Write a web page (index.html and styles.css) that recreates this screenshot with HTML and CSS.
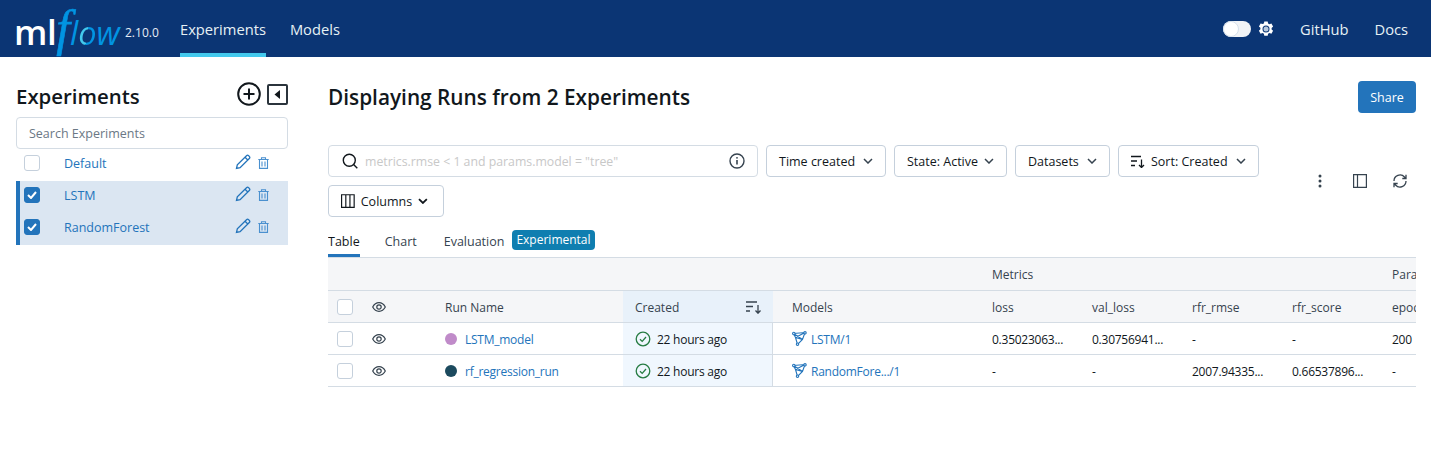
FILE: index.html
```html
<!DOCTYPE html>
<html lang="en">
<head>
    <meta charset="UTF-8">
    <title>MLflow Experiments</title>
    <link rel="stylesheet" href="styles.css">
</head>
<body>

    <!-- Top bar -->
    <header class="topbar">
        <div class="logo"><span class="logo-ml">ml</span><span class="logo-f">f</span><span class="logo-flow">l<span class="logo-o">o</span>w</span></div>
        <span class="version">2.10.0</span>
        <nav class="nav">
            <a class="nav-link active">Experiments</a>
            <a class="nav-link">Models</a>
        </nav>
        <div class="nav-right">
            <span class="toggle"><span class="toggle-knob"></span></span>
            <svg class="gear" width="16" height="16" viewBox="0 0 16 16"><path fill="#fff" fill-rule="evenodd" d="M6.300.5h3.400l.4 2 1.300.7 2-.6 1.700 2.900-1.500 1.400v1.500l1.500 1.400-1.700 2.900-2-.6-1.300.7-.4 2H6.300l-.4-2-1.300-.7-2 .6L.9 9.700l1.500-1.400V6.800L.9 5.400l1.700-2.900 2 .6 1.300-.7zM8 4.500a3.500 3.500 0 1 0 0 7 3.500 3.500 0 0 0 0-7z"/><circle cx="8" cy="8" r="2.500" fill="#b9c9dc"/></svg>
            <a class="nav-link">GitHub</a>
            <a class="nav-link">Docs</a>
        </div>
    </header>

    <div class="page">

        <!-- Experiment list -->
        <aside class="sidebar">
            <div class="side-head">
                <h2>Experiments</h2>
                <div class="side-head-icons">
                    <svg width="24" height="24" viewBox="0 0 24 24" fill="none" stroke="#11171c" stroke-width="2"><circle cx="12" cy="12" r="10.800"/><path d="M12 6.500v11M6.500 12h11"/></svg>
                    <svg width="21" height="21" viewBox="0 0 21 21"><rect x="1" y="1" width="19" height="19" rx="1" fill="none" stroke="#2b343c" stroke-width="2"/><path d="M13 6v9L7.500 10.500z" fill="#11171c"/></svg>
                </div>
            </div>
            <div class="side-search">Search Experiments</div>
            <ul class="exp-list">
                <li class="exp-item">
                    <span class="check"></span>
                    <span class="exp-name">Default</span>
                    <svg class="pencil" width="16" height="16" viewBox="0 0 16 16" fill="none" stroke="#2374bb" stroke-width="1.300"><path d="M1.500 14.500l.8-3.600L11.500 1.700a1.500 1.500 0 0 1 2.100 0l.7.7a1.500 1.500 0 0 1 0 2.100L5.100 13.700zM10 3.200l2.800 2.800"/></svg>
                    <svg class="trash" width="11" height="12" viewBox="0 0 11 12" fill="none" stroke="#4a90cf" stroke-width="1.100"><path d="M.3 2.500h10.400M3.500 2.500V.8h4v1.700M1.500 2.500v8.900h8V2.500M4 4.500v5M7 4.500v5"/></svg>
                </li>
                <li class="exp-item selected">
                    <span class="check checked"><svg width="10" height="8" viewBox="0 0 10 8" fill="none" stroke="#fff" stroke-width="2"><path d="M1 4l3 3 5-6"/></svg></span>
                    <span class="exp-name">LSTM</span>
                    <svg class="pencil" width="16" height="16" viewBox="0 0 16 16" fill="none" stroke="#2374bb" stroke-width="1.300"><path d="M1.500 14.500l.8-3.600L11.500 1.700a1.500 1.500 0 0 1 2.100 0l.7.7a1.500 1.500 0 0 1 0 2.100L5.100 13.700zM10 3.200l2.800 2.800"/></svg>
                    <svg class="trash" width="11" height="12" viewBox="0 0 11 12" fill="none" stroke="#4a90cf" stroke-width="1.100"><path d="M.3 2.500h10.400M3.500 2.500V.8h4v1.700M1.500 2.500v8.900h8V2.500M4 4.500v5M7 4.500v5"/></svg>
                </li>
                <li class="exp-item selected">
                    <span class="check checked"><svg width="10" height="8" viewBox="0 0 10 8" fill="none" stroke="#fff" stroke-width="2"><path d="M1 4l3 3 5-6"/></svg></span>
                    <span class="exp-name">RandomForest</span>
                    <svg class="pencil" width="16" height="16" viewBox="0 0 16 16" fill="none" stroke="#2374bb" stroke-width="1.300"><path d="M1.500 14.500l.8-3.600L11.500 1.700a1.500 1.500 0 0 1 2.100 0l.7.7a1.500 1.500 0 0 1 0 2.100L5.100 13.700zM10 3.200l2.800 2.800"/></svg>
                    <svg class="trash" width="11" height="12" viewBox="0 0 11 12" fill="none" stroke="#4a90cf" stroke-width="1.100"><path d="M.3 2.500h10.400M3.500 2.500V.8h4v1.700M1.500 2.500v8.900h8V2.500M4 4.500v5M7 4.500v5"/></svg>
                </li>
            </ul>
        </aside>

        <!-- Runs -->
        <main class="main">
            <div class="title-row">
                <h1>Displaying Runs from 2 Experiments</h1>
                <button class="share">Share</button>
            </div>

            <div class="controls">
                <div class="filters">
                    <div class="run-search">
                        <svg width="16" height="16" viewBox="0 0 16 16" fill="none" stroke="#11171c" stroke-width="1.400"><circle cx="7.300" cy="7.300" r="6"/><path d="M11.600 11.600l3.700 3.700"/></svg>
                        <span class="placeholder">metrics.rmse &lt; 1 and params.model = "tree"</span>
                        <svg class="info" width="16" height="16" viewBox="0 0 16 16" fill="none" stroke="#36434f" stroke-width="1.400"><circle cx="8" cy="8" r="7"/><path d="M8 7v4.500" stroke-width="1.600"/><circle cx="8" cy="4.800" r=".9" fill="#36434f" stroke="none"/></svg>
                    </div>
                    <button class="btn w-time">Time created <svg class="chev" width="10" height="6" viewBox="0 0 10 6"><path d="M1 1l4 4 4-4" fill="none" stroke="#36434f" stroke-width="1.500"/></svg></button>
                    <button class="btn w-state">State: Active <svg class="chev" width="10" height="6" viewBox="0 0 10 6"><path d="M1 1l4 4 4-4" fill="none" stroke="#36434f" stroke-width="1.500"/></svg></button>
                    <button class="btn w-data">Datasets <svg class="chev" width="10" height="6" viewBox="0 0 10 6"><path d="M1 1l4 4 4-4" fill="none" stroke="#36434f" stroke-width="1.500"/></svg></button>
                    <button class="btn w-sort">
                        <svg width="14" height="13" viewBox="0 0 14 13" fill="none" stroke="#11171c" stroke-width="1.300"><path d="M0 1.500h10M0 6h6M0 10.500h4M10.500 4.500v8M8 10l2.500 2.500L13 10"/></svg>
                        Sort: Created <svg class="chev" width="10" height="6" viewBox="0 0 10 6"><path d="M1 1l4 4 4-4" fill="none" stroke="#36434f" stroke-width="1.500"/></svg></button>
                    <button class="btn w-cols">
                        <svg width="14" height="14" viewBox="0 0 14 14" fill="none" stroke="#11171c" stroke-width="1.200"><path d="M.6.600h12.800v12.800H.6zM4.900.600v12.800M9.100.600v12.800"/></svg>
                        Columns <svg class="chev" width="10" height="6" viewBox="0 0 10 6"><path d="M1 1l4 4 4-4" fill="none" stroke="#11171c" stroke-width="1.800"/></svg></button>
                </div>
                <div class="tools">
                    <svg width="4" height="14" viewBox="0 0 4 14" fill="#36434f"><circle cx="2" cy="2" r="1.500"/><circle cx="2" cy="7" r="1.500"/><circle cx="2" cy="12" r="1.500"/></svg>
                    <svg width="14" height="14" viewBox="0 0 14 14" fill="none" stroke="#36434f" stroke-width="1.200"><path d="M.6.600h12.800v12.800H.6zM4.500.600v12.800"/></svg>
                    <svg width="14" height="14" viewBox="0 0 14 14" fill="none" stroke="#36434f" stroke-width="1.300"><path d="M1 7a6 6 0 0 1 10.500-4L13 4.500M13 .8v3.700H9.300M13 7a6 6 0 0 1-10.500 4L1 9.500M1 13.200V9.500h3.700"/></svg>
                </div>
            </div>

            <div class="tabs">
                <span class="tab active">Table</span>
                <span class="tab">Chart</span>
                <span class="tab tab-eval">Evaluation</span>
                <span class="badge">Experimental</span>
            </div>

            <div class="table">
                <div class="row group-row">
                    <span class="cell c-metrics">Metrics</span>
                    <span class="cell c-params">Parameters</span>
                </div>
                <div class="row head-row">
                    <span class="cell c-check"><span class="check"></span></span>
                    <span class="cell"><svg width="14" height="10" viewBox="0 0 14 10" fill="none" stroke="#36434f" stroke-width="1.200"><path d="M.7 5C2.300 2 4.500.7 7 .7S11.700 2 13.300 5C11.700 8 9.500 9.300 7 9.300S2.300 8 .7 5z"/><circle cx="7" cy="5" r="2.200"/></svg></span>
                    <span class="cell">Run Name</span>
                    <span class="cell c-created head-created">Created
                        <svg width="16" height="14" viewBox="0 0 16 14" fill="none" stroke="#36434f" stroke-width="1.300"><path d="M0 2h11M0 6.500h7M0 11h4M12 5v8M9.500 10.500l2.500 2.700 2.500-2.700"/></svg></span>
                    <span class="cell c-spacer"></span>
                    <span class="cell">Models</span>
                    <span class="cell">loss</span>
                    <span class="cell">val_loss</span>
                    <span class="cell">rfr_rmse</span>
                    <span class="cell">rfr_score</span>
                    <span class="cell">epochs</span>
                </div>
                <div class="row run-row">
                    <span class="cell c-check"><span class="check"></span></span>
                    <span class="cell"><svg width="14" height="10" viewBox="0 0 14 10" fill="none" stroke="#36434f" stroke-width="1.200"><path d="M.7 5C2.300 2 4.500.7 7 .7S11.700 2 13.300 5C11.700 8 9.500 9.300 7 9.300S2.300 8 .7 5z"/><circle cx="7" cy="5" r="2.200"/></svg></span>
                    <span class="cell"><i class="dot dot-lstm"></i><a class="link">LSTM_model</a></span>
                    <span class="cell c-created"><svg width="16" height="16" viewBox="0 0 16 16" fill="none" stroke="#277c43" stroke-width="1.300"><circle cx="8" cy="8" r="6.800"/><path d="M5 8.200l2.200 2.200L11 6"/></svg>22 hours ago</span>
                    <span class="cell c-spacer"></span>
                    <span class="cell"><svg class="model" width="15" height="15" viewBox="0 0 15 15" fill="none" stroke="#2374bb" stroke-width="1.100"><path d="M1.500 2.500L13 1.500 10.500 8.500 5.500 13.500 3.500 6.500zM3.500 6.500l7 2M1.500 2.500l9 6M13 1.500L3.500 6.500"/><circle cx="1.800" cy="2.500" r="1.200" fill="#fff"/><circle cx="13" cy="1.800" r="1.200" fill="#fff"/><circle cx="5.500" cy="13.200" r="1.200" fill="#fff"/></svg><a class="link">LSTM/1</a></span>
                    <span class="cell">0.35023063...</span>
                    <span class="cell">0.30756941...</span>
                    <span class="cell">-</span>
                    <span class="cell">-</span>
                    <span class="cell">200</span>
                </div>
                <div class="row run-row">
                    <span class="cell c-check"><span class="check"></span></span>
                    <span class="cell"><svg width="14" height="10" viewBox="0 0 14 10" fill="none" stroke="#36434f" stroke-width="1.200"><path d="M.7 5C2.300 2 4.500.7 7 .7S11.700 2 13.300 5C11.700 8 9.500 9.300 7 9.300S2.300 8 .7 5z"/><circle cx="7" cy="5" r="2.200"/></svg></span>
                    <span class="cell"><i class="dot dot-rf"></i><a class="link">rf_regression_run</a></span>
                    <span class="cell c-created"><svg width="16" height="16" viewBox="0 0 16 16" fill="none" stroke="#277c43" stroke-width="1.300"><circle cx="8" cy="8" r="6.800"/><path d="M5 8.200l2.200 2.200L11 6"/></svg>22 hours ago</span>
                    <span class="cell c-spacer"></span>
                    <span class="cell"><svg class="model" width="15" height="15" viewBox="0 0 15 15" fill="none" stroke="#2374bb" stroke-width="1.100"><path d="M1.500 2.500L13 1.500 10.500 8.500 5.500 13.500 3.500 6.500zM3.500 6.500l7 2M1.500 2.500l9 6M13 1.500L3.500 6.500"/><circle cx="1.800" cy="2.500" r="1.200" fill="#fff"/><circle cx="13" cy="1.800" r="1.200" fill="#fff"/><circle cx="5.500" cy="13.200" r="1.200" fill="#fff"/></svg><a class="link">RandomFore.../1</a></span>
                    <span class="cell">-</span>
                    <span class="cell">-</span>
                    <span class="cell">2007.94335...</span>
                    <span class="cell">0.66537896...</span>
                    <span class="cell">-</span>
                </div>
            </div>
        </main>
    </div>

</body>
</html>
```

FILE: styles.css
```css
* {
    box-sizing: border-box;
}

body {
    margin: 0;
    font-family: "Open Sans", "Noto Sans", sans-serif;
    font-size: 12.5px;
    color: #11171c;
    background-color: #fff;
    overflow: hidden;
}

/* top bar */
.topbar {
    display: flex;
    align-items: center;
    height: 57px;
    padding: 0 23px 0 16px;
    background-color: #0b3574;
}

.logo {
    display: flex;
    align-items: baseline;
    width: 109px;
    height: 57px;
    padding-top: 1px;
    line-height: 54px;
    flex-shrink: 0;
}

.logo-ml {
    margin-left: -2px;
    font-size: 35px;
    font-weight: 600;
    letter-spacing: -.5px;
    color: #fff;
}

.logo-f {
    font-family: "Liberation Serif", serif;
    font-size: 50px;
    font-style: italic;
    -webkit-text-stroke: .6px #0194e2;
    color: #0194e2;
}

.logo-flow {
    font-size: 32.5px;
    font-style: italic;
    font-weight: 500;
    color: #0194e2;
}

.logo-o {
    background: linear-gradient(100deg, #43c9ed 50%, #0194e2 50%);
    -webkit-background-clip: text;
    background-clip: text;
    color: transparent;
}

.version {
    width: 55px;
    padding-top: 8px;
    font-size: 12px;
    color: #e6edf5;
}

.nav,
.nav-right {
    display: flex;
    align-items: center;
    height: 100%;
}

.nav {
    gap: 24px;
}

.nav-right {
    margin-left: auto;
    gap: 26px;
}

.nav-link {
    display: flex;
    align-items: center;
    height: 100%;
    font-size: 14.7px;
    color: #e6f1f5;
    border-bottom: 4px solid transparent;
    padding-top: 4px;
}

.nav-link.active {
    border-bottom-color: #43c9ed;
}

.toggle {
    display: block;
    width: 28px;
    height: 16px;
    margin-right: -19px;
    background-color: #f1f3f6;
    border-radius: 8px;
}

.toggle-knob {
    display: block;
    width: 16px;
    height: 16px;
    border-radius: 50%;
    background-color: #fff;
    border: 1px solid #d5e0ec;
}

/* page */
.page {
    display: flex;
    padding: 0 15px 0 16px;
}

.sidebar {
    width: 272px;
    flex-shrink: 0;
    margin-right: 40px;
    padding-top: 24px;
}

.side-head {
    display: flex;
    justify-content: space-between;
    align-items: center;
    height: 36px;
    padding-bottom: 6px;
}

h2 {
    margin: 0;
    font-size: 20.4px;
    font-weight: 600;
}

.side-head-icons {
    display: flex;
    align-items: center;
    gap: 6px;
    margin-top: -4px;
}

.side-search {
    height: 32px;
    line-height: 31px;
    padding-left: 12px;
    border: 1px solid #d4dce4;
    border-radius: 4px;
    color: #6b7885;
}

.exp-list {
    margin: 0;
    padding: 0;
    list-style: none;
}

.exp-item {
    display: flex;
    align-items: center;
    height: 32px;
    padding: 0 19px 4px 8px;
    color: #2374bb;
}

.exp-item.selected {
    background-color: #dbe6f2;
    border-left: 4px solid #2374bb;
    padding-left: 4px;
}

.exp-name {
    flex: 1;
    margin-left: 24px;
}

.pencil {
    margin-right: 7px;
    margin-top: -2px;
}

.check {
    display: inline-flex;
    align-items: center;
    justify-content: center;
    width: 16px;
    height: 16px;
    background-color: #fff;
    border: 1px solid #c5d0dc;
    border-radius: 3px;
    flex-shrink: 0;
}

.check.checked {
    background-color: #2374bb;
    border-color: #2374bb;
}

.main {
    flex: 1;
    min-width: 0;
    overflow: hidden;
    padding-top: 24px;
}

.title-row {
    display: flex;
    justify-content: space-between;
    align-items: center;
    height: 32px;
    margin-bottom: 32px;
}

h1 {
    margin: 0;
    font-size: 20.8px;
    font-weight: 600;
}

.share {
    width: 58px;
    height: 32px;
    padding: 0;
    border: none;
    border-radius: 4px;
    background-color: #2374bb;
    color: #fff;
    font: inherit;
}

/* filters */
.controls {
    display: flex;
    height: 80px;
}

.filters {
    display: flex;
    flex-wrap: wrap;
    flex-shrink: 0;
    align-content: flex-start;
    gap: 8px;
    width: 940px;
}

.run-search {
    display: flex;
    align-items: center;
    width: 430px;
    height: 32px;
    padding: 0 12px 0 13px;
    border: 1px solid #d4dce4;
    border-radius: 4px;
}

.placeholder {
    flex: 1;
    margin-left: 7px;
    font-size: 12.3px;
    color: #c8c8c8;
}

.btn {
    display: inline-flex;
    align-items: center;
    gap: 6px;
    height: 32px;
    padding: 0 12px;
    background-color: #fff;
    border: 1px solid #c5d0dc;
    border-radius: 4px;
    font: inherit;
    color: #11171c;
    white-space: nowrap;
}

.chev {
    margin-left: auto;
}

.w-time { width: 120px; }
.w-state { width: 113px; }
.w-data { width: 95px; }
.w-sort { width: 141px; }
.w-cols { width: 116px; padding-right: 15px; }

.tools {
    display: grid;
    flex-shrink: 0;
    grid-template-columns: repeat(3, 40px);
    justify-items: center;
    align-items: center;
    height: 72px;
    margin-left: 32px;
}

/* tabs */
.tabs {
    display: flex;
    align-items: center;
    height: 41px;
    margin-top: -8px;
    border-bottom: 1px solid #d4dce4;
    padding-top: 9px;
}

.tab {
    display: flex;
    align-items: center;
    height: 31px;
    padding-top: 3px;
    border-bottom: 3px solid transparent;
    margin-right: 26px;
    color: #36434f;
}

.tab.active {
    margin-right: 25px;
    color: #11171c;
    border-bottom-color: #2374bb;
}

.tab-eval {
    margin-left: 1px;
    margin-right: 8px;
}

.badge {
    height: 20px;
    line-height: 19px;
    padding: 0 4px;
    margin-bottom: 4px;
    border-radius: 4px;
    background-color: #0f7eb0;
    font-size: 12px;
    color: #fff;
}

/* runs table */
.row {
    display: grid;
    grid-template-columns: 32px 73px 190px 150px 7px 200px 100px 100px 100px 100px 100px;
    height: 32px;
    border-bottom: 1px solid #d4dce4;
    font-size: 12px;
}

.group-row,
.head-row {
    background-color: #f5f6f8;
    color: #36434f;
}

.group-row {
    height: 33px;
}

.head-row .cell {
    padding-top: 2px;
}

.head-row .cell > svg,
.head-row .cell > .check {
    margin-top: -2px;
}

.run-row {
    letter-spacing: -.25px;
}

.run-row .cell {
    padding-top: 1px;
}

.run-row .cell > svg,
.run-row .cell > .check,
.run-row .cell > .dot {
    margin-top: -1px;
}

.cell {
    display: flex;
    align-items: center;
    padding-left: 12px;
    white-space: nowrap;
    overflow: hidden;
}

.c-check {
    padding-left: 9px;
}

.c-metrics {
    grid-column: 7 / span 4;
}

.c-params {
    grid-column: 11;
}

.head-row .c-spacer,
.run-row .c-spacer {
    padding: 0;
}

.c-created {
    gap: 6px;
    background-color: #f0f7fe;
    border-right: 1px solid #d4dce4;
}

.head-created {
    justify-content: space-between;
    padding-right: 11px;
    background-color: #e8f1fa;
    border-right: none;
}

.link {
    color: #2374bb;
}

.dot {
    display: block;
    width: 12px;
    height: 12px;
    margin-right: 8px;
    border-radius: 50%;
}

.dot-lstm {
    background-color: #c08bc9;
}

.dot-rf {
    background-color: #1c4a5e;
}

.model {
    margin-right: 4px;
    flex-shrink: 0;
}
```
